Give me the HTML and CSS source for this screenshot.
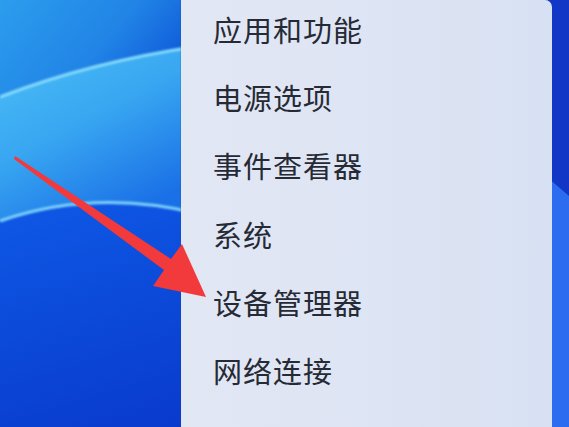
FILE: index.html
```html
<!DOCTYPE html>
<html lang="zh-CN">
<head>
<meta charset="utf-8">
<title>右键菜单</title>
<link rel="stylesheet" href="styles.css">
</head>
<body>
<div class="desktop">
  <svg class="wallpaper" width="569" height="427" viewBox="0 0 569 427" aria-hidden="true">
    <defs>
      <linearGradient id="gA" x1="0" y1="0" x2="1" y2="0.4">
        <stop offset="0" stop-color="#2c9ded"/>
        <stop offset="0.6" stop-color="#2184e6"/>
        <stop offset="1" stop-color="#0f5ad9"/>
      </linearGradient>
      <linearGradient id="gB" x1="0" y1="0" x2="0.6" y2="1">
        <stop offset="0" stop-color="#4cbff7"/>
        <stop offset="0.5" stop-color="#38a6f1"/>
        <stop offset="1" stop-color="#1a70e6"/>
      </linearGradient>
      <linearGradient id="gC" x1="0" y1="0" x2="0.4" y2="1">
        <stop offset="0" stop-color="#1f84ea"/>
        <stop offset="0.35" stop-color="#0f5ce8"/>
        <stop offset="1" stop-color="#0939cc"/>
      </linearGradient>
      <filter id="blur" x="-5%" y="-50%" width="110%" height="200%">
        <feGaussianBlur stdDeviation="0.9"/>
      </filter>
    </defs>
    <rect x="0" y="0" width="569" height="427" fill="url(#gC)"/>
    <path d="M0 0 H200 V46 Q90 62 0 97 Z" fill="url(#gA)"/>
    <path d="M0 97 Q90 62 200 46 V214 Q95 188 0 221 Z" fill="url(#gB)"/>
    <path d="M0 97 Q90 62 200 46" fill="none" stroke="#86dcfb" stroke-width="3" filter="url(#blur)"/>
    <path d="M0 221 Q95 188 200 214" fill="none" stroke="#7fd3fa" stroke-width="3" filter="url(#blur)"/>
    <path d="M548 0 H569 V196 L548 178 Z" fill="#1237c7"/>
    <path d="M548 178 L569 196 V427 H548 Z" fill="#2c6cf1"/>
  </svg>

  <nav class="menu">
    <ul class="menu-list">
      <li class="menu-item">应用和功能</li>
      <li class="menu-item">电源选项</li>
      <li class="menu-item">事件查看器</li>
      <li class="menu-item">系统</li>
      <li class="menu-item">设备管理器</li>
      <li class="menu-item">网络连接</li>
    </ul>
  </nav>

  <svg class="arrow" width="569" height="427" viewBox="0 0 569 427" aria-hidden="true">
    <path d="M15 156 L171 259 L182 244 L206 297 L153 286 L164 270 L14 159 Z" fill="#f23a3c"/>
  </svg>
</div>
</body>
</html>
```

FILE: styles.css
```css
html, body {
  margin: 0;
  padding: 0;
}

body {
  width: 569px;
  height: 427px;
  overflow: hidden;
  font-family: "Noto Sans CJK SC", "Noto Sans", sans-serif;
}

.desktop {
  position: relative;
  width: 569px;
  height: 427px;
  display: flex;
  overflow: hidden;
}

.wallpaper {
  position: absolute;
  left: 0;
  top: 0;
  z-index: 0;
}

.menu {
  position: relative;
  z-index: 1;
  margin-left: 181px;
  width: 371px;
  height: 427px;
  background: linear-gradient(90deg, #e2e7f4 0%, #dde4f3 55%, #d8e1f3 100%);
  border-top-right-radius: 7px;
  box-shadow: -1px 0 0 rgba(40, 60, 120, 0.15);
}

.menu-list {
  list-style: none;
  margin: -5px 0 0;
  padding: 0 0 0 32px;
  display: flex;
  flex-direction: column;
}

.menu-item {
  height: 68.2px;
  display: flex;
  align-items: center;
  font-size: 29px;
  font-weight: 400;
  color: #262a34;
  letter-spacing: 1px;
}

.arrow {
  position: absolute;
  left: 0;
  top: 0;
  z-index: 2;
  filter: blur(0.6px);
}
```
